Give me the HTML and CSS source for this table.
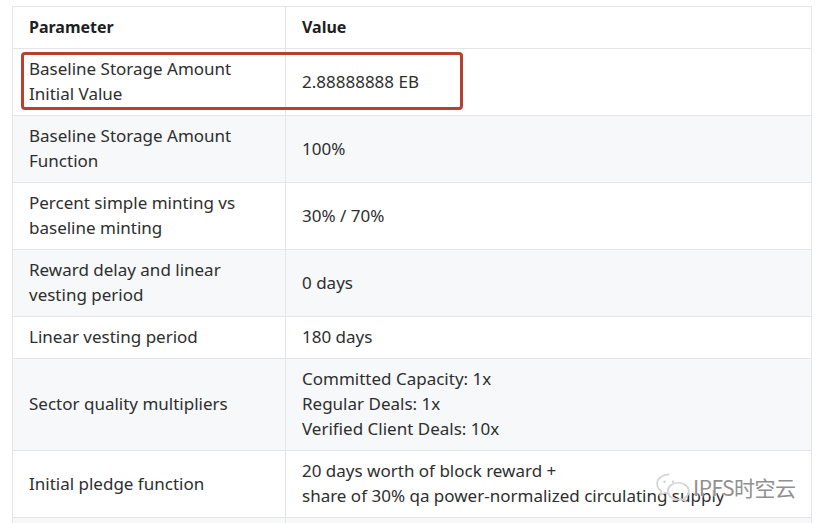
FILE: index.html
```html
<!DOCTYPE html>
<html>
<head>
<meta charset="utf-8">
<link rel="stylesheet" href="styles.css">
</head>
<body>
<div class="wrap">
  <table class="params">
    <thead>
      <tr><th class="c1">Parameter</th><th>Value</th></tr>
    </thead>
    <tbody>
      <tr><td>Baseline Storage Amount<br>Initial Value</td><td>2.88888888 EB</td></tr>
      <tr class="alt"><td>Baseline Storage Amount<br>Function</td><td>100%</td></tr>
      <tr><td>Percent simple minting vs<br>baseline minting</td><td>30% / 70%</td></tr>
      <tr class="alt"><td>Reward delay and linear<br>vesting period</td><td>0 days</td></tr>
      <tr><td>Linear vesting period</td><td>180 days</td></tr>
      <tr class="alt"><td>Sector quality multipliers</td><td>Committed Capacity: 1x<br>Regular Deals: 1x<br>Verified Client Deals: 10x</td></tr>
      <tr><td>Initial pledge function</td><td>20 days worth of block reward +<br>share of 30% qa power-normalized circulating supply</td></tr>
      <tr class="alt"><td>&nbsp;</td><td>&nbsp;</td></tr>
    </tbody>
  </table>
  <div class="highlight"></div>
  <div class="watermark">
    <svg class="wm-icon" width="36" height="32" viewBox="0 0 34 30">
      <path d="M13 3C6.9 3 2 7 2 12c0 2.8 1.5 5.2 3.9 6.9L5 22.5l4.2-2.1c1.2.4 2.5.6 3.8.6" fill="none" stroke="#d4d4d4" stroke-width="1.6" stroke-linecap="round"/>
      <path d="M22 11c-5.5 0-10 3.6-10 8s4.5 8 10 8c1.1 0 2.2-.2 3.2-.5l3.6 1.8-.8-3.1C30.5 23.7 32 21.5 32 19c0-4.4-4.5-8-10-8z" fill="none" stroke="#d4d4d4" stroke-width="1.6"/>
      <circle cx="9" cy="10" r="1.2" fill="#d4d4d4"/>
      <circle cx="17" cy="10" r="1.2" fill="#d4d4d4"/>
    </svg>
    <span class="wm-text">IPFS时空云</span>
  </div>
</div>
</body>
</html>
```
FILE: styles.css
```css
html, body {
  margin: 0;
  padding: 0;
  background: #ffffff;
}
body {
  font-family: "Noto Sans", "Open Sans", "Liberation Sans", sans-serif;
  color: #2e2e2e;
}
.wrap {
  position: relative;
  padding: 6px 0 0 12px;
  width: 800px;
  height: 517px;
  overflow: hidden;
}
.params {
  border-collapse: collapse;
  width: 800px;
  font-size: 17px;
  line-height: 25px;
}
.params th,
.params td {
  border: 1px solid #e3e5e8;
  padding: 7px 16px 9px;
  text-align: left;
  vertical-align: middle;
  white-space: nowrap;
}
.params th {
  padding: 8px 16px;
  font-size: 16px;
  font-weight: 700;
  color: #1f1f1f;
}
.params .c1 {
  width: 240px;
}
.params tr.alt td {
  background: #f6f8fa;
}
.highlight {
  position: absolute;
  left: 21px;
  top: 52px;
  width: 436px;
  height: 52px;
  border: 3px solid #b7402f;
  border-radius: 4px;
}
.watermark {
  position: absolute;
  left: 655px;
  top: 471px;
  display: flex;
  align-items: center;
  gap: 2px;
}
.wm-text {
  font-family: "Noto Sans CJK SC", "Noto Sans", sans-serif;
  font-size: 21px;
  color: #909090;
  text-shadow: 0 0 2px #ffffff, 0 0 2px #ffffff;
  letter-spacing: -0.5px;
}
```
